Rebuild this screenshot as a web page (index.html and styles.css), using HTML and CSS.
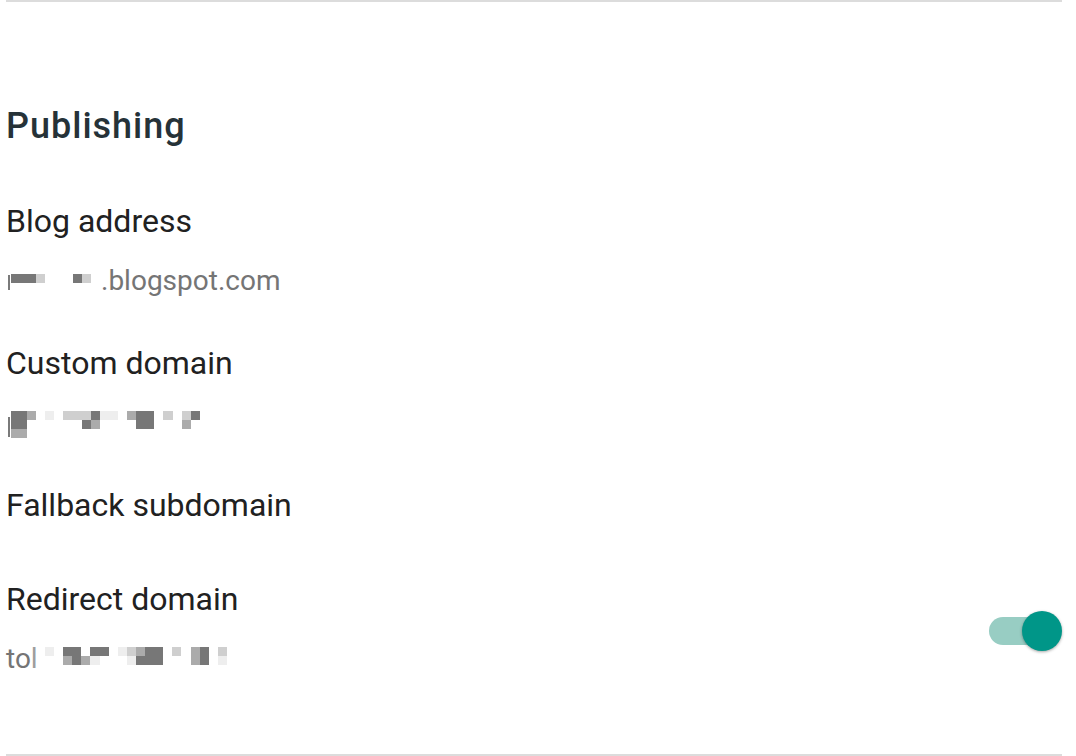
FILE: index.html
```html
<!DOCTYPE html>
<html>
<head>
  <title>Settings - Publishing</title>
  <link rel="stylesheet" href="styles.css">
</head>
<body>
  <div class="page">
    <div class="rule"></div>

    <h2 class="section-title">Publishing</h2>

    <div class="setting">
      <div class="setting-title">Blog address</div>
      <div class="setting-value">
        <span class="stem stem-short"></span>
        <span class="redact redact-blog">
          <i class="k"></i><i class="l"></i><i></i><i class="k"></i><i class="l"></i>
        </span>
        <span class="value-text">.blogspot.com</span>
      </div>
    </div>

    <div class="setting">
      <div class="setting-title">Custom domain</div>
      <div class="setting-value">
        <span class="stem stem-long"></span>
        <span class="redact redact-domain">
          <i class="k"></i><i class="m"></i><i></i><i class="v"></i><i></i><i class="l"></i><i class="l"></i><i class="l"></i><i class="k"></i><i class="v"></i><i class="v"></i><i></i><i class="m"></i><i class="k"></i><i class="k"></i><i></i><i class="l"></i><i></i><i class="l"></i><i class="k"></i>
          <i class="k"></i><i></i><i></i><i></i><i></i><i></i><i></i><i class="k"></i><i class="m"></i><i></i><i></i><i></i><i></i><i class="k"></i><i class="k"></i><i></i><i></i><i></i><i class="m"></i><i></i>
          <i class="m"></i>
        </span>
      </div>
    </div>

    <div class="setting setting-empty">
      <div class="setting-title">Fallback subdomain</div>
    </div>

    <div class="setting setting-switch">
      <div class="setting-main">
        <div class="setting-title">Redirect domain</div>
        <div class="setting-value">
          <span class="value-text value-prefix">to<span class="faded">l</span></span>
          <span class="redact redact-redirect">
            <i class="v"></i><i></i><i class="k"></i><i class="k"></i><i></i><i class="k"></i><i class="k"></i><i></i><i class="v"></i><i class="l"></i><i class="m"></i><i class="k"></i><i class="k"></i><i></i><i class="l"></i><i></i><i class="m"></i><i class="k"></i><i></i><i class="l"></i>
            <i></i><i></i><i class="m"></i><i class="k"></i><i class="m"></i><i class="v"></i><i></i><i></i><i></i><i class="v"></i><i class="k"></i><i class="k"></i><i class="k"></i><i></i><i></i><i></i><i class="m"></i><i class="k"></i><i></i><i class="v"></i>
          </span>
        </div>
      </div>
      <div class="switch">
        <span class="switch-track"></span>
        <span class="switch-thumb"></span>
      </div>
    </div>

    <div class="rule rule-bottom"></div>
  </div>
</body>
</html>
```

FILE: styles.css
```css
body {
  margin: 0;
  font-family: Roboto, 'Noto Sans', sans-serif;
  color: #212121;
  background-color: #ffffff;
}

.page {
  padding: 0 14px 0 6px;
}

.rule {
  height: 2px;
  background-color: #dcdcdc;
}

.rule-bottom {
  margin-top: 77px;
}

.section-title {
  margin: 102px 0 0;
  font-size: 36px;
  line-height: 44px;
  font-weight: 500;
  letter-spacing: 1px;
  color: #263238;
}

.setting {
  padding-top: 53px;
}

.setting + .setting {
  padding-top: 44px;
}

.setting-empty + .setting {
  padding-top: 54px;
}

.setting-title {
  font-size: 32px;
  line-height: 40px;
}

.setting-value {
  display: flex;
  align-items: flex-start;
  height: 36px;
  margin-top: 22px;
  font-size: 28px;
  line-height: 36px;
  color: #757575;
}

.value-text {
  margin-left: 10px;
}

.value-prefix {
  width: 39px;
  margin-left: 0;
}

.faded {
  color: #9e9e9e;
}

.stem {
  width: 2px;
  margin-left: 2px;
  margin-right: 1px;
  background-color: #7a7a7a;
}

.stem-short {
  height: 15px;
  margin-top: 12px;
}

.stem-long {
  height: 20px;
  margin-top: 12px;
}

/* pixelated redaction blocks */
.redact {
  display: grid;
  grid-auto-rows: 9px;
}

.redact i {
  display: block;
}

.redact .k { background-color: #777777; }
.redact .m { background-color: #ababab; }
.redact .l { background-color: #cfcfcf; }
.redact .v { background-color: #eeeeee; }

.redact-blog {
  margin-top: 11px;
  grid-template-columns: 25px 9px 28px 9px 9px;
}

.redact-domain {
  margin-top: 6px;
  grid-template-columns: 16px repeat(19, 9.1px);
}

.redact-redirect {
  margin-top: 6px;
  grid-template-columns: repeat(20, 9.1px);
}

.setting-switch {
  display: flex;
  align-items: center;
  justify-content: space-between;
}

.switch {
  display: flex;
  align-items: center;
  margin-top: 6px;
}

.switch-track {
  width: 68px;
  height: 28px;
  border-radius: 14px;
  background-color: #98cdc3;
}

.switch-thumb {
  width: 40px;
  height: 40px;
  margin-left: -35px;
  border-radius: 50%;
  background-color: #009688;
  box-shadow: 0 1px 3px rgba(0, 0, 0, 0.35);
}
```
